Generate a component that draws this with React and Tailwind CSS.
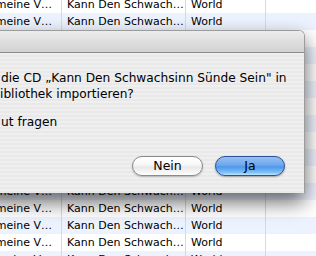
import React from "react";

const ROWS = 16;

function Row({ index }) {
  const striped = index % 2 === 1;
  return (
    <div
      className={`flex h-[17px] items-center text-[11px] leading-[17px] text-black ${
        striped ? "bg-[#edf3fe]" : "bg-white"
      }`}
    >
      <div className="flex w-[62px] shrink-0 justify-end border-r border-[#d9d9d9] pr-[9px] whitespace-nowrap overflow-hidden">
        meine V…
      </div>
      <div className="w-[124px] shrink-0 border-r border-[#d9d9d9] pl-[5px] whitespace-nowrap overflow-hidden">
        Kann Den Schwach…
      </div>
      <div className="w-[80px] shrink-0 border-r border-[#d9d9d9] pl-[5px] whitespace-nowrap">
        World
      </div>
      <div className="flex-1" />
    </div>
  );
}

function AquaButton({ label, primary }) {
  return (
    <button
      className={`flex h-[20px] items-center justify-center rounded-full border text-[12.5px] text-black ${
        primary
          ? "w-[70px] border-[#2f4f96] bg-[linear-gradient(180deg,#98c0f0_0%,#6ea8ee_45%,#4f96ea_55%,#7cc0f7_85%,#bde6ff_100%)] shadow-[0_1px_2px_rgba(0,0,0,0.35)]"
          : "w-[71px] border-[#8a8a8a] bg-[linear-gradient(180deg,#ffffff_0%,#f7f7f7_45%,#e8e8e8_55%,#f6f6f6_85%,#ffffff_100%)] shadow-[0_1px_2px_rgba(0,0,0,0.25)]"
      }`}
    >
      {label}
    </button>
  );
}

export default function App() {
  return (
    <div
      className="relative h-[256px] w-[316px] overflow-hidden bg-white"
      style={{ fontFamily: '"DejaVu Sans", "Liberation Sans", sans-serif' }}
    >
      <div className="-mt-[4px]">
        {Array.from({ length: ROWS }).map((_, i) => (
          <Row key={i} index={i} />
        ))}
      </div>

      {/* dialog window over the track list */}
      <div className="absolute left-[-20px] top-[30px] flex h-[163px] w-[325px] flex-col overflow-hidden rounded-tr-[6px] border-t border-r border-[#9c9c9c] shadow-[0_9px_20px_rgba(0,0,0,0.6)]">
        <div className="h-[22px] shrink-0 border-b border-[#8c8c8c] bg-[linear-gradient(180deg,#ececec_0%,#dcdcdc_60%,#d2d2d2_100%)]" />
        <div className="flex-1 bg-[repeating-linear-gradient(180deg,#efefef_0px,#efefef_2px,#e9e9e9_2px,#e9e9e9_4px)] pl-[21px] pt-[17px] text-[12.2px] leading-[16px] text-black">
          <div className="whitespace-nowrap">die CD „Kann Den Schwachsinn Sünde Sein" in</div>
          <div className="-ml-[1px] whitespace-nowrap">ibliothek importieren?</div>
          <div className="mt-[12px] whitespace-nowrap">ut fragen</div>
          <div className="mt-[26px] flex justify-end gap-[12px] pr-[19px]">
            <AquaButton label="Nein" />
            <AquaButton label="Ja" primary />
          </div>
        </div>
      </div>
    </div>
  );
}
